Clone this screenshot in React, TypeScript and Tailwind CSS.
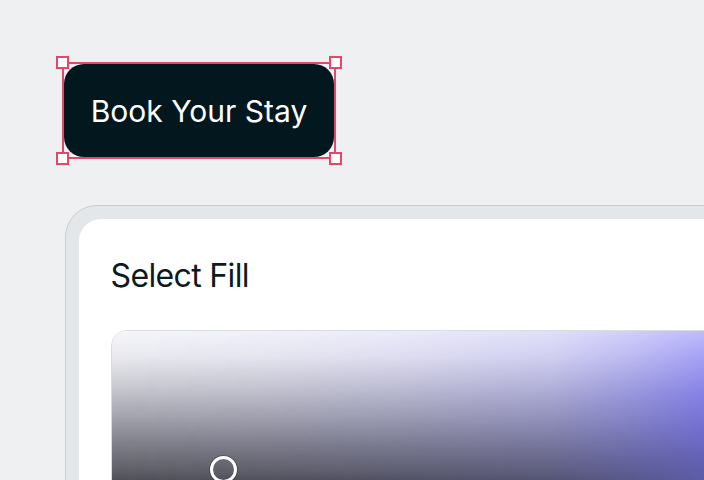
import React from "react";

function Handle({ pos }: { pos: string }) {
  return (
    <span
      className={`absolute w-[13px] h-[13px] bg-white border-2 border-[#e5476b] ${pos}`}
    />
  );
}

export default function App() {
  return (
    <div className="w-[704px] h-[480px] overflow-hidden bg-[#eff0f2] pt-[62px] pl-[62px] font-['Inter','Liberation_Sans',sans-serif]">
      <div className="relative inline-block border-2 border-[#e5476b]">
        <button className="flex items-center justify-center w-[270px] h-[93px] rounded-[20px] bg-[#03171f] text-white text-[30px] leading-none">
          Book Your Stay
        </button>
        <Handle pos="-top-[8px] -left-[8px]" />
        <Handle pos="-top-[8px] -right-[8px]" />
        <Handle pos="-bottom-[8px] -left-[8px]" />
        <Handle pos="-bottom-[8px] -right-[8px]" />
      </div>

      <div className="mt-[46px] ml-[3px] w-[800px] rounded-[32px] border-[1.5px] border-[#c9cdd1] bg-[#e4e7e9] p-[12.5px]">
        <div className="rounded-[22px] bg-white pl-8 pr-8 pt-[33px] pb-8">
          <h2 className="text-[32px] leading-[48px] tracking-[-0.02em] text-[#0c1b23]">
            Select Fill
          </h2>
          <div className="relative mt-[30px] h-[220px] rounded-2xl border border-[#dadde0] overflow-hidden">
            <div className="absolute inset-0 bg-[linear-gradient(to_bottom,rgb(245,245,250)_0px,rgb(234,234,240)_25px,rgb(202,202,210)_55px,rgb(165,165,175)_85px,rgb(125,125,135)_115px,rgb(95,95,103)_140px,rgb(78,78,86)_150px,rgb(40,40,46)_220px)]" />
            <div className="absolute inset-0 bg-[linear-gradient(to_bottom,rgb(190,186,252)_0px,rgb(160,156,242)_30px,rgb(130,127,228)_65px,rgb(112,110,205)_100px,rgb(98,96,180)_130px,rgb(92,92,165)_150px,rgb(66,66,120)_220px)] [mask-image:linear-gradient(to_right,rgba(0,0,0,0)_0px,rgba(0,0,0,0.06)_150px,rgba(0,0,0,0.17)_289px,rgba(0,0,0,0.36)_439px,rgba(0,0,0,0.66)_519px,#000_593px)]" />
            <span className="absolute left-[98px] top-[125px] w-[27px] h-[27px] rounded-full border-[3px] border-white shadow-[0_0_0_1px_rgba(0,0,0,0.25)]" />
          </div>
        </div>
      </div>
    </div>
  );
}
